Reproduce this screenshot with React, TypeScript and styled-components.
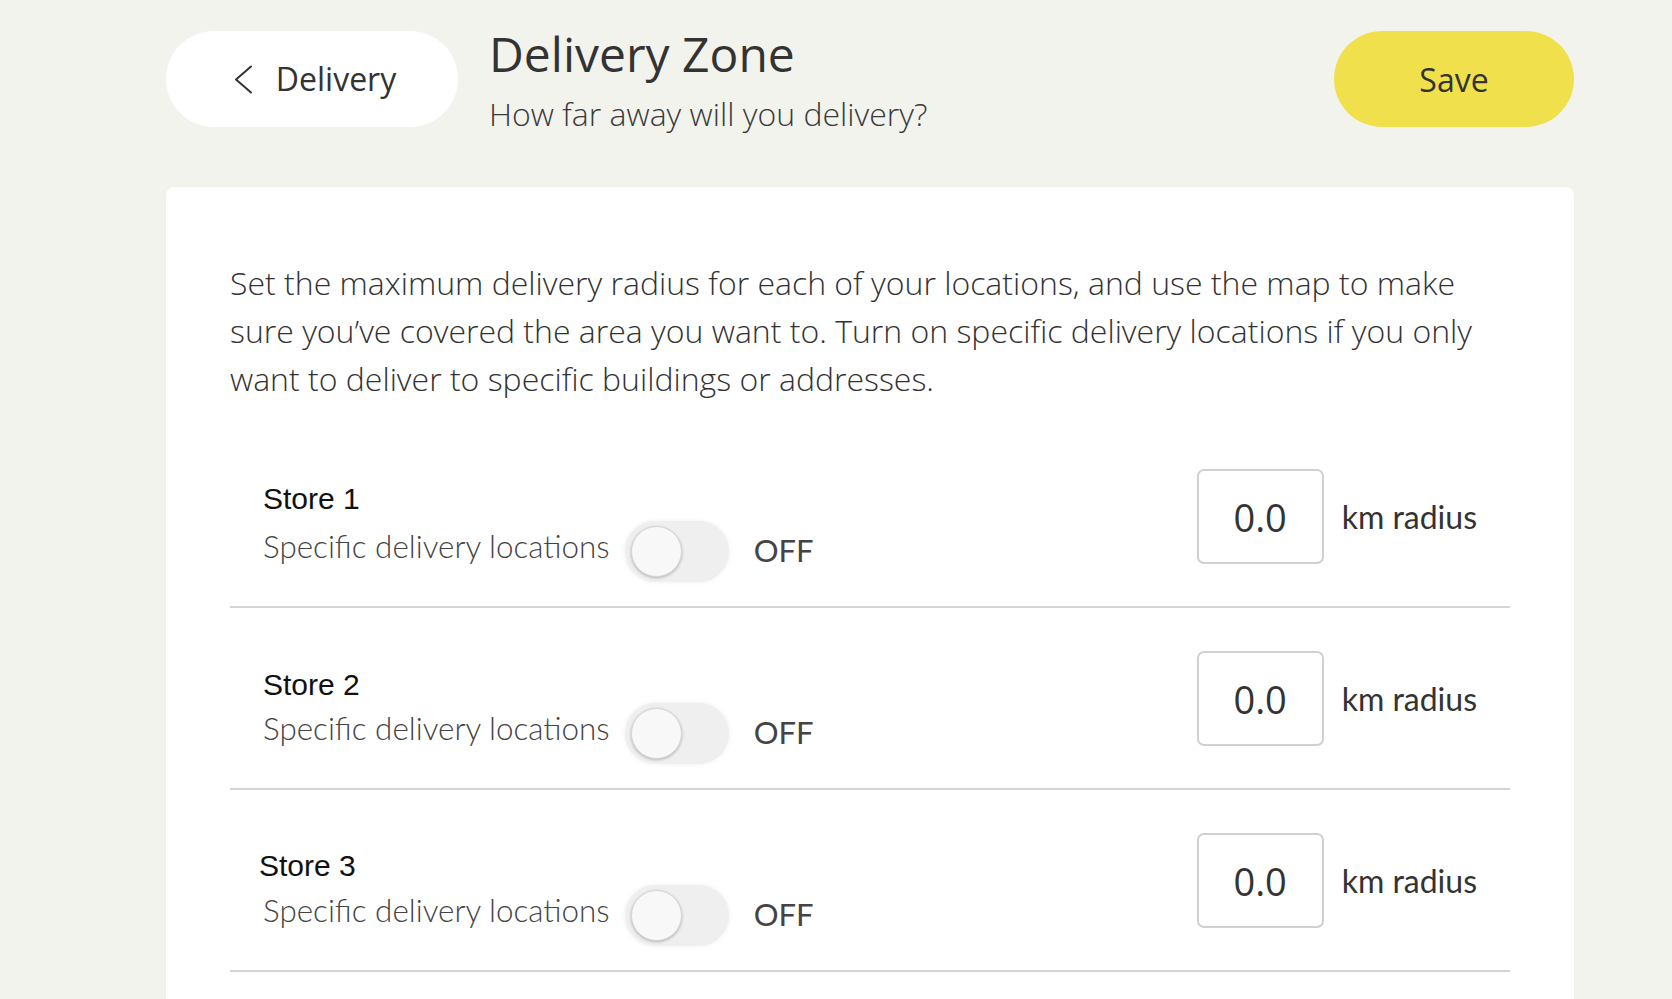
import styled, { createGlobalStyle } from "styled-components"

const GlobalStyle = createGlobalStyle`
    html, body {
        margin: 0;
        padding: 0;
        background: #f3f3ee;
        overflow: hidden;
    }
    * {
        box-sizing: border-box;
    }
`

// the labels in the original sit a little unevenly, kept as is
const stores = [
    { name: "Store 1", shiftX: 0, shiftY: 0 },
    { name: "Store 2", shiftX: 0, shiftY: 4 },
    { name: "Store 3", shiftX: -4, shiftY: 3 },
]

const Chevron = () => (
    <svg width="19" height="29" viewBox="0 0 19 29" fill="none">
        <polyline points="17,1.5 2,14.5 17,27.5" stroke="#333" strokeWidth="2" strokeLinecap="round" strokeLinejoin="round" />
    </svg>
)

export default function App() {
    return (
        <>
            <GlobalStyle />
            <Page>
                <Header>
                    <BackButton type="button">
                        <Chevron />
                        <span>Delivery</span>
                    </BackButton>
                    <Titles>
                        <h1>Delivery Zone</h1>
                        <p>How far away will you delivery?</p>
                    </Titles>
                    <SaveButton type="button">Save</SaveButton>
                </Header>
                <Card>
                    <Intro>
                        Set the maximum delivery radius for each of your locations, and use the map to make<br />
                        sure you’ve covered the area you want to. Turn on specific delivery locations if you only<br />
                        want to deliver to specific buildings or addresses.
                    </Intro>
                    {stores.map(store => (
                        <StoreRow key={store.name}>
                            <StoreInfo>
                                <StoreName $shiftX={store.shiftX} $shiftY={store.shiftY}>{store.name}</StoreName>
                                <ToggleLine>
                                    <span>Specific delivery locations</span>
                                    <Toggle>
                                        <Knob />
                                    </Toggle>
                                    <ToggleState>OFF</ToggleState>
                                </ToggleLine>
                            </StoreInfo>
                            <Radius>
                                <RadiusInput defaultValue="0.0" />
                                <span>km radius</span>
                            </Radius>
                        </StoreRow>
                    ))}
                </Card>
            </Page>
        </>
    )
}

const Page = styled.div`
    width: 1408px;
    margin-left: 166px;
    padding-top: 26px;
    font-family: "Open Sans", "Liberation Sans", sans-serif;
    color: #333;
`

const Header = styled.div`
    display: flex;
    align-items: flex-start;
    height: 161px;
`

const BackButton = styled.button`
    margin-top: 5px;
    width: 292px;
    height: 96px;
    border: 0;
    border-radius: 48px;
    background: #fff;
    display: flex;
    align-items: center;
    justify-content: center;
    gap: 23px;
    padding: 0 0 0 6px;
    font-family: "Open Sans", sans-serif;
    font-size: 32px;
    color: #333;
    cursor: pointer;
    span {
        margin-top: -2px;
    }
`

const Titles = styled.div`
    margin-left: 31px;
    flex: 1;
    h1 {
        margin: 0;
        font-size: 48px;
        line-height: 56px;
        font-weight: 400;
        color: #333;
    }
    p {
        margin: 12px 0 0;
        font-size: 32px;
        line-height: 40px;
        font-weight: 300;
        color: #3a3a3a;
    }
`

const SaveButton = styled.button`
    margin-top: 5px;
    width: 240px;
    height: 96px;
    border: 0;
    border-radius: 48px;
    background: #f0e04c;
    font-family: "Open Sans", sans-serif;
    font-size: 32px;
    color: #333;
    cursor: pointer;
`

const Card = styled.div`
    background: #fff;
    border-radius: 8px;
    box-shadow: 0 0 3px rgba(0, 0, 0, 0.04);
    padding: 72px 64px 60px;
`

const Intro = styled.p`
    margin: 0 0 23px;
    font-size: 32px;
    line-height: 48px;
    font-weight: 300;
    color: #333;
    white-space: nowrap;
`

const StoreRow = styled.div`
    height: 182px;
    display: flex;
    align-items: flex-start;
    justify-content: space-between;
    padding: 43px 33px 0;
    border-bottom: 2px solid #d3d3cf;
`

const StoreInfo = styled.div`
    margin-top: 12px;
    display: flex;
    flex-direction: column;
    gap: 4px;
`

const StoreName = styled.div<{ $shiftX: number; $shiftY: number }>`
    margin: ${p => p.$shiftY}px 0 ${p => -p.$shiftY}px ${p => p.$shiftX}px;
    font-family: "Liberation Sans", Arial, sans-serif;
    font-size: 30px;
    line-height: 36px;
    color: #111;
`

const ToggleLine = styled.div`
    display: flex;
    align-items: center;
    font-family: Lato, sans-serif;
    font-weight: 300;
    font-size: 31.4px;
    color: #444;
    span {
        margin-bottom: 12px;
    }
`

const Toggle = styled.div`
    margin-left: 15px;
    width: 104px;
    height: 61px;
    border-radius: 31px;
    background: #efefef;
    box-shadow: 0 0 5px rgba(0, 0, 0, 0.07);
    display: flex;
    align-items: center;
    padding-left: 6px;
`

const Knob = styled.div`
    width: 51px;
    height: 51px;
    border-radius: 50%;
    background: #f8f8f8;
    border: 1px solid #d6d6d6;
    box-shadow: 0 1px 3px rgba(0, 0, 0, 0.25);
`

const ToggleState = styled.span`
    margin-left: 25px;
    margin-top: 8px;
    font-family: Lato, sans-serif;
    font-weight: 400;
    font-size: 31px;
    color: #444;
`

const Radius = styled.div`
    display: flex;
    align-items: center;
    gap: 18px;
    font-family: Lato, sans-serif;
    font-size: 32px;
    color: #333;
`

const RadiusInput = styled.input`
    width: 127px;
    height: 95px;
    border: 2px solid #d0d0cc;
    border-radius: 7px;
    text-align: center;
    font-family: "Open Sans", sans-serif;
    font-size: 38px;
    color: #333;
    outline: none;
    padding: 0;
`
